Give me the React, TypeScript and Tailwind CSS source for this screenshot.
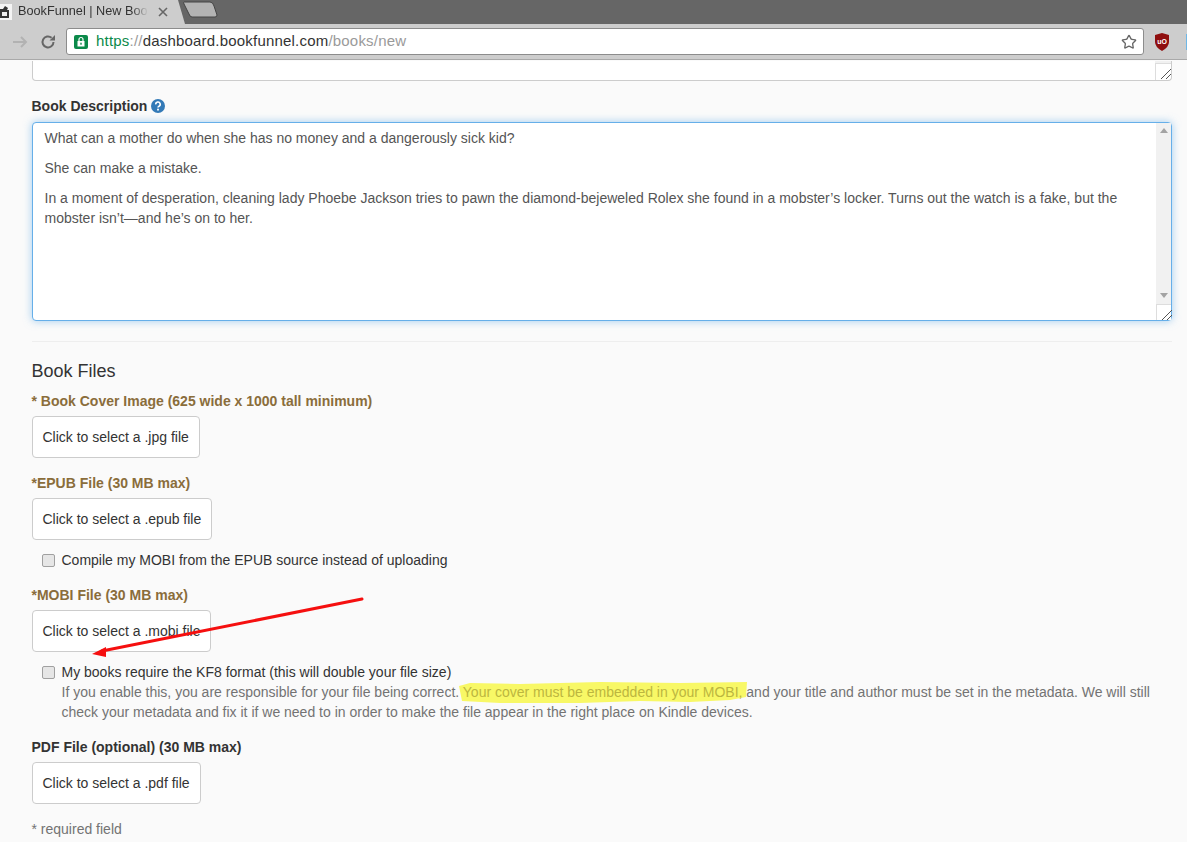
import { Star } from "lucide-react";

const font = "font-['Liberation_Sans',Arial,sans-serif]";

function FileButton({ label }: { label: string }) {
  return (
    <button
      type="button"
      className="block h-[42px] rounded border border-[#cccccc] bg-white px-[10px] text-sm text-[#333333]"
    >
      {label}
    </button>
  );
}

function Resizer() {
  return (
    <svg width="16" height="16" viewBox="0 0 16 16" className="block">
      <path d="M15 5 L5 15 M15 10 L10 15" stroke="#555" strokeWidth="1" fill="none" />
    </svg>
  );
}

function BrowserChrome() {
  return (
    <div className="relative z-10 h-[61px] shrink-0 overflow-hidden">
      <div className="flex h-6 bg-[#666666]">
        <div className="flex h-6 w-[176px] items-center bg-[#cdcdcd] text-[#333333]">
          <svg width="12" height="16" viewBox="0 0 12 16" className="shrink-0">
            <rect width="12" height="16" fill="#f4f4f4" />
            <path d="M0 5 H3 L5 2 L8 4 L7 6 H9 V14 H0 Z" fill="#333" />
            <path d="M2 8 H7 V12 H2 Z" fill="#eee" />
          </svg>
          <span className="ml-[6px] w-[130px] overflow-hidden whitespace-nowrap text-[12.7px] [mask-image:linear-gradient(to_right,black_88%,transparent)]">
            BookFunnel | New Book
          </span>
          <svg width="10" height="10" viewBox="0 0 10 10" className="ml-[10px] shrink-0">
            <path d="M1 1 L9 9 M9 1 L1 9" stroke="#666" strokeWidth="1.6" />
          </svg>
        </div>
        <svg width="45" height="24" viewBox="0 0 45 24" className="shrink-0">
          <path d="M0 0 H2 L9 24 H0 Z" fill="#cdcdcd" />
          <path d="M8 2 H34 Q37 2 38 6 L41 15 Q41 17 39 17 H16 Q14 17 13 14 L8 4 Q7 2 8 2 Z" fill="#b3b3b3" stroke="#444" strokeWidth="1" />
        </svg>
      </div>
      <div className="flex h-[36px] items-center border-b border-[#a9a9a9] bg-[#cdcdcd]">
        <svg width="16" height="14" viewBox="0 0 16 14" className="ml-[12px] shrink-0">
          <path d="M1 7 H14 M9 2 L14 7 L9 12" stroke="#b2b2b2" strokeWidth="2" fill="none" />
        </svg>
        <svg width="16" height="16" viewBox="0 0 16 16" className="ml-[12px] shrink-0">
          <path d="M13.5 8 A5.5 5.5 0 1 1 11.6 3.8" stroke="#666" strokeWidth="2" fill="none" />
          <path d="M9.5 6.5 H15 V1 Z" fill="#666" />
        </svg>
        <div className="ml-[10px] flex h-[27px] w-[1078px] items-center rounded-[3px] border border-[#8c8c8c] bg-white pl-[7px] pr-[6px]">
          <svg width="14" height="14" viewBox="0 0 14 14" className="shrink-0">
            <rect width="14" height="14" rx="2" fill="#0b8a4a" />
            <rect x="3.5" y="6" width="7" height="5.5" fill="#fff" />
            <path d="M5 6 V4.5 A2 2 0 0 1 9 4.5 V6" stroke="#fff" strokeWidth="1.2" fill="none" />
            <rect x="6.3" y="7.7" width="1.4" height="2" fill="#0b8a4a" />
          </svg>
          <span className="ml-[8px] text-[15px] tracking-[0.2px] whitespace-nowrap">
            <span className="text-[#0b8a4a]">https</span>
            <span className="text-[#9a9a9a]">://</span>
            <span className="text-[#333333]">dashboard.bookfunnel.com</span>
            <span className="text-[#9a9a9a]">/books/new</span>
          </span>
          <Star className="ml-auto shrink-0 text-[#666666]" size={16} strokeWidth={2} />
        </div>
        <svg width="16" height="18" viewBox="0 0 16 18" className="ml-[10px] shrink-0">
          <path d="M8 0 L15 2 V9 Q15 14 8 18 Q1 14 1 9 V2 Z" fill="#8f0f0f" />
          <text x="8" y="10.5" textAnchor="middle" fontSize="7" fontWeight="700" fill="#fff" fontFamily="Liberation Sans">
            uO
          </text>
        </svg>
        <div className="ml-auto h-[16px] w-px bg-[#6fb7e6]" />
      </div>
    </div>
  );
}

function FormBody() {
  return (
    <div className="relative z-10 flex-1 overflow-hidden pl-[31.5px] pr-[15px] text-sm leading-5 text-[#333333]">
      {/* previous field, scrolled off */}
      <div className="flex h-[20px] justify-end rounded-b border border-t-0 border-[#cccccc] bg-white">
        <div className="flex h-[19px] w-4 flex-col">
          <div className="h-[4px] bg-[#f1f1f1]" />
          <div className="border-l border-t border-[#dddddd]">
            <Resizer />
          </div>
        </div>
      </div>

      <label className="mt-[15px] flex h-5 items-center font-bold">
        Book Description
        <svg width="14" height="14" viewBox="0 0 14 14" className="ml-[4px]">
          <circle cx="7" cy="7" r="7" fill="#337ab7" />
          <path d="M4.8 5.4 A2.2 2.2 0 1 1 8 7.2 Q7 7.7 7 8.6" stroke="#fff" strokeWidth="1.6" fill="none" />
          <rect x="6.1" y="9.7" width="1.8" height="1.8" fill="#fff" />
        </svg>
      </label>

      <div className="mt-[6px] flex h-[199px] rounded border border-[#66afe9] bg-white shadow-[0_0_8px_rgba(102,175,233,0.6)]">
        <div className="flex-1 px-3 py-[5px] text-[#555555]">
          <p>What can a mother do when she has no money and a dangerously sick kid?</p>
          <p className="mt-[10px]">She can make a mistake.</p>
          <p className="mt-[10px]">
            In a moment of desperation, cleaning lady Phoebe Jackson tries to pawn the diamond-bejeweled Rolex she found in a mobster’s locker. Turns out the watch is a fake, but the mobster isn’t—and he’s on to her.
          </p>
        </div>
        <div className="flex w-[15px] flex-col items-center bg-[#f1f1f1]">
          <div className="mt-[5px] h-0 w-0 border-x-[4px] border-b-[5px] border-x-transparent border-b-[#a3a3a3]" />
          <div className="mb-[6px] mt-auto h-0 w-0 border-x-[4px] border-t-[5px] border-x-transparent border-t-[#a3a3a3]" />
          <div className="h-[16px] w-[15px] border-l border-t border-[#dddddd] bg-white">
            <Resizer />
          </div>
        </div>
      </div>

      <hr className="mt-[20px] border-t border-[#eeeeee]" />

      <h4 className="mt-[19px] text-lg leading-5">Book Files</h4>

      <label className="mt-[10px] block font-bold text-[#8a6d3b]">* Book Cover Image (625 wide x 1000 tall minimum)</label>
      <div className="mt-[5px]">
        <FileButton label="Click to select a .jpg file" />
      </div>

      <label className="mt-[15px] block font-bold text-[#8a6d3b]">*EPUB File (30 MB max)</label>
      <div className="mt-[5px]">
        <FileButton label="Click to select a .epub file" />
      </div>
      <div className="mt-[10px] flex h-5 items-center pl-[10px]">
        <span className="h-[13px] w-[13px] rounded-[2px] border border-[#a0a0a0] bg-[#e6e6e6]" />
        <span className="ml-[7px]">Compile my MOBI from the EPUB source instead of uploading</span>
      </div>

      <label className="mt-[15px] block font-bold text-[#8a6d3b]">*MOBI File (30 MB max)</label>
      <div className="mt-[5px]">
        <FileButton label="Click to select a .mobi file" />
      </div>
      <div className="mt-[10px] flex pl-[10px]">
        <span className="mt-[4px] h-[13px] w-[13px] shrink-0 rounded-[2px] border border-[#a0a0a0] bg-[#e6e6e6]" />
        <div className="ml-[7px]">
          <div>My books require the KF8 format (this will double your file size)</div>
          <div className="text-[#737373]">
            If you enable this, you are responsible for your file being correct. <span className="text-[#bcb63f]">Your cover must be embedded in your MOBI,</span> and your title and author must be set in the metadata. We will still check your metadata and fix it if we need to in order to make the file appear in the right place on Kindle devices.
          </div>
        </div>
      </div>

      <label className="mt-[15px] block font-bold">PDF File (optional) (30 MB max)</label>
      <div className="mt-[5px]">
        <FileButton label="Click to select a .pdf file" />
      </div>

      <p className="mt-[15px] text-[#737373]">* required field</p>
    </div>
  );
}

export default function App() {
  return (
    <div className={`relative flex h-[842px] w-[1187px] flex-col overflow-hidden bg-[#fafafa] ${font}`}>
      {/* marker stroke sits under the form text */}
      <svg width="1187" height="842" viewBox="0 0 1187 842" className="pointer-events-none absolute left-0 top-0">
        <path
          d="M459 686 L470 683 L520 684 L600 682 L680 683 L747 682 L746 697 L730 700 L690 702 L640 701 L580 703 L500 703 L462 701 Z"
          fill="#f8f866"
        />
      </svg>
      <BrowserChrome />
      <FormBody />
      {/* red annotation arrow */}
      <svg width="1187" height="842" viewBox="0 0 1187 842" className="pointer-events-none absolute left-0 top-0 z-20">
        <path d="M362 599 L102 651" stroke="#f50f0f" strokeWidth="3" strokeLinecap="round" />
        <path d="M92 654 L106 647 L106 657 Z" fill="#f50f0f" />
      </svg>
    </div>
  );
}
